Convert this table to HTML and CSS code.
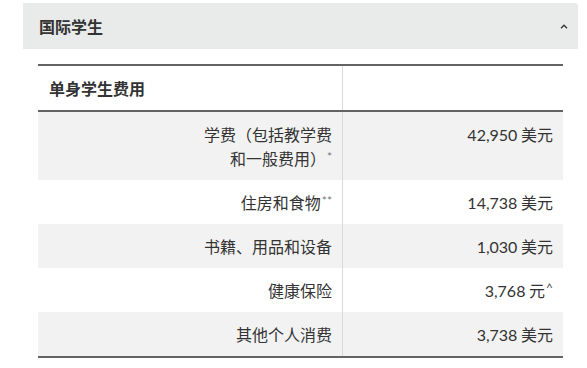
FILE: index.html
```html
<!DOCTYPE html>
<html lang="zh">
<head>
<meta charset="utf-8">
<link rel="stylesheet" href="styles.css">
</head>
<body>
<div class="page">
  <div class="accordion-head">
    <span class="acc-title">国际学生</span>
    <svg class="chevron" width="8" height="5" viewBox="0 0 8 5"><path d="M1 4.2 L4 1.2 L7 4.2" fill="none" stroke="#333" stroke-width="1.3"/></svg>
  </div>
  <table class="fees">
    <thead>
      <tr><th class="label">单身学生费用</th><th class="value"></th></tr>
    </thead>
    <tbody>
      <tr class="alt"><td class="label">学费（包括教学费<br>和一般费用）<sup>*</sup></td><td class="value"><span class="num">42,950</span> 美元</td></tr>
      <tr><td class="label">住房和食物<sup>**</sup></td><td class="value"><span class="num">14,738</span> 美元</td></tr>
      <tr class="alt"><td class="label">书籍、用品和设备</td><td class="value"><span class="num">1,030</span> 美元</td></tr>
      <tr><td class="label">健康保险</td><td class="value"><span class="num">3,768</span> 元<sup class="caret">^</sup></td></tr>
      <tr class="alt"><td class="label">其他个人消费</td><td class="value"><span class="num">3,738</span> 美元</td></tr>
    </tbody>
  </table>
</div>
</body>
</html>
```
FILE: styles.css
```css
html, body {
  margin: 0;
  padding: 0;
  background: #fff;
}
body {
  font-family: "Noto Sans CJK SC", sans-serif;
  color: #333;
  font-size: 16px;
}
.page {
  padding: 3px 9px 0 23px;
}
.accordion-head {
  height: 46px;
  background: #e9eaea;
  border-radius: 0 3px 0 0;
  display: flex;
  align-items: center;
  justify-content: space-between;
  padding: 0 10px 0 16px;
}
.acc-title {
  font-weight: bold;
  font-size: 16px;
  color: #333;
}
.chevron {
  display: block;
  margin-top: 1px;
}
.fees {
  margin: 15px 0 0 15px;
  width: 525px;
  border-collapse: collapse;
  border-top: 2px solid #636363;
  border-bottom: 2px solid #636363;
  table-layout: fixed;
}
.fees th, .fees td {
  padding: 10px 10px;
  line-height: 24px;
  font-size: 16px;
  vertical-align: top;
}
.fees th.label {
  width: 283px;
  text-align: left;
  font-weight: bold;
  padding-left: 11px;
}
.fees thead tr {
  border-bottom: 2px solid #636363;
}
.fees .label {
  border-right: 1px solid #d9d9d9;
  text-align: right;
}
.fees .value {
  text-align: right;
}
.fees .num {
  font-family: Lato, sans-serif;
  vertical-align: top;
  line-height: 24px;
  position: relative;
  top: 1px;
}
.fees tr.alt td {
  background: #f2f2f2;
}
.fees sup {
  font-family: Lato, sans-serif;
  font-size: 12px;
  line-height: 1;
  color: #777;
  vertical-align: top;
  position: relative;
  top: 5px;
  margin-left: 1px;
}
.fees sup.caret {
  top: 4px;
  color: #444;
}
```
